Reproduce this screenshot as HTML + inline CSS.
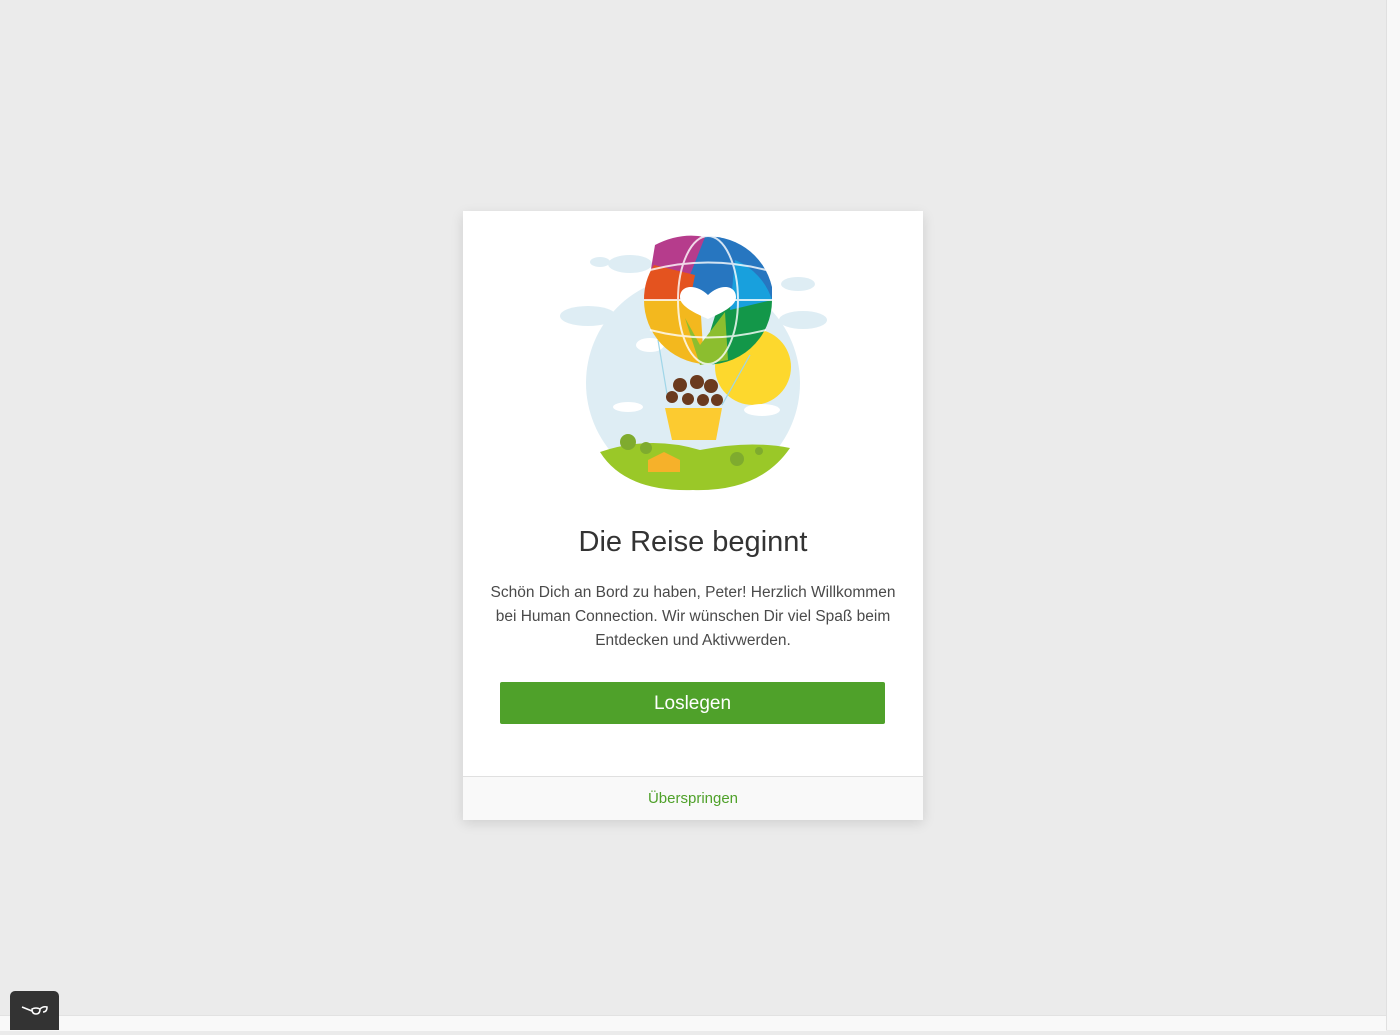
<!DOCTYPE html>
<html><head><meta charset="utf-8"><style>
html,body{margin:0;padding:0;}
body{width:1400px;height:1030px;background:#ebebeb;position:relative;overflow:hidden;font-family:"Liberation Sans",sans-serif;}
.sb{position:absolute;left:1386px;top:0;width:14px;height:1030px;background:#f8f8f8;border-left:1px solid #e0e0e0;}
.foot{position:absolute;left:0;top:1015px;width:1386px;height:15px;background:#f9f9f9;border-top:1px solid #e2e2e2;}
.card{position:absolute;left:463px;top:211px;width:460px;height:608px;background:#fff;box-shadow:0 4px 12px rgba(0,0,0,.12);}
h1{position:absolute;top:315px;left:0;width:460px;text-align:center;margin:0;font-size:29px;font-weight:normal;color:#333;}
p{position:absolute;top:370px;left:20px;width:420px;text-align:center;margin:0;font-size:15.5px;line-height:24px;color:#4a4a4a;}
.btn{position:absolute;left:37px;top:471px;width:385px;height:42px;background:#4fa12a;color:#fff;font-size:19px;line-height:44px;text-align:center;border-radius:2px;}
.cf{position:absolute;left:0;top:565px;width:460px;height:43px;background:#f9f9f9;border-top:1px solid #e0e0e0;text-align:center;line-height:43px;color:#4fa12a;font-size:15px;}
.gl{position:absolute;left:10px;top:991px;width:49px;height:39px;background:#333;border-radius:5px 5px 0 0;}
</style></head><body>
<div class="sb"></div><div class="foot"></div>
<div class="gl"><svg width="49" height="39" viewBox="0 0 49 39"><g fill="none" stroke="#fff" stroke-width="1.5"><path d="M12 16 L22 20"/><path d="M22 18 q4 -2 8 0 q0 5 -4 5 q-4 0 -4 -5z"/><path d="M30 18 q3 -3 7 -2 q0 5 -4 5"/></g></svg></div>
<div class="card">
<svg style="position:absolute;left:87px;top:14px" width="290" height="280" viewBox="550 225 290 280">
<circle cx="693" cy="383" r="107" fill="#deedf4"/>
<g fill="#deedf4"><ellipse cx="630" cy="264" rx="22" ry="9"/><ellipse cx="600" cy="262" rx="10" ry="5"/><ellipse cx="588" cy="316" rx="28" ry="10"/><ellipse cx="798" cy="284" rx="17" ry="7"/><ellipse cx="803" cy="320" rx="24" ry="9"/></g>
<circle cx="753" cy="367" r="38" fill="#fdd82d"/>
<path d="M600 452 Q650 435 700 450 Q750 440 790 448 Q760 492 693 490 Q625 492 600 452z" fill="#9ac828"/>
<g fill="#fff"><ellipse cx="628" cy="407" rx="15" ry="5"/><ellipse cx="762" cy="410" rx="18" ry="6"/><ellipse cx="650" cy="345" rx="14" ry="7"/></g>
<g stroke="#9fd6e8" stroke-width="1.2"><line x1="658" y1="340" x2="668" y2="400"/><line x1="750" y1="355" x2="722" y2="405"/></g>
<path d="M700 237 a65 65 0 0 1 72 50 L772 300 L655 300 a65 65 0 0 1 45 -63z" fill="#2776c0"/>
<path d="M655 245 Q680 232 705 237 L690 275 L650 275z" fill="#b63c8c"/>
<path d="M644 300 a64 64 0 0 1 10 -35 L695 275 L690 300z" fill="#e4531f"/>
<path d="M644 300 a64 64 0 0 0 60 64 L700 300z" fill="#f3b81e"/>
<path d="M700 364 a64 64 0 0 0 72 -64 L720 300z" fill="#139749"/>
<path d="M735 260 a64 64 0 0 1 37 40 L730 310z" fill="#18a0dd"/>
<path d="M685 318 L700 345 L725 312 L728 360 L700 365 Z" fill="#8cbe2f"/>
<path d="M708 295 c-12 -12 -28 -10 -28 2 c0 8 10 14 28 22 c18 -8 28 -14 28 -22 c0 -12 -16 -14 -28 -2z" fill="#fff"/>
<g stroke="#fff" stroke-width="2" fill="none" opacity=".8"><ellipse cx="708" cy="300" rx="30" ry="64"/><line x1="644" y1="300" x2="772" y2="300"/><path d="M650 270 Q708 255 766 270"/><path d="M650 330 Q708 345 766 330"/></g>
<path d="M665 408 L722 408 L716 440 L672 440z" fill="#fccb30"/>
<g fill="#6b3a1e"><circle cx="680" cy="385" r="7"/><circle cx="697" cy="382" r="7"/><circle cx="711" cy="386" r="7"/><circle cx="672" cy="397" r="6"/><circle cx="688" cy="399" r="6"/><circle cx="703" cy="400" r="6"/><circle cx="717" cy="400" r="6"/></g>
<path d="M648 460 L664 452 L680 460 L680 472 L648 472z" fill="#f6b12a"/>
<g fill="#7fab2e"><circle cx="628" cy="442" r="8"/><circle cx="646" cy="448" r="6"/><circle cx="737" cy="459" r="7"/><circle cx="759" cy="451" r="4"/></g>
</svg>
<h1>Die Reise beginnt</h1>
<p>Schön Dich an Bord zu haben, Peter! Herzlich Willkommen bei Human Connection. Wir wünschen Dir viel Spaß beim Entdecken und Aktivwerden.</p>
<div class="btn">Loslegen</div>
<div class="cf">Überspringen</div>
</div>
</body></html>
